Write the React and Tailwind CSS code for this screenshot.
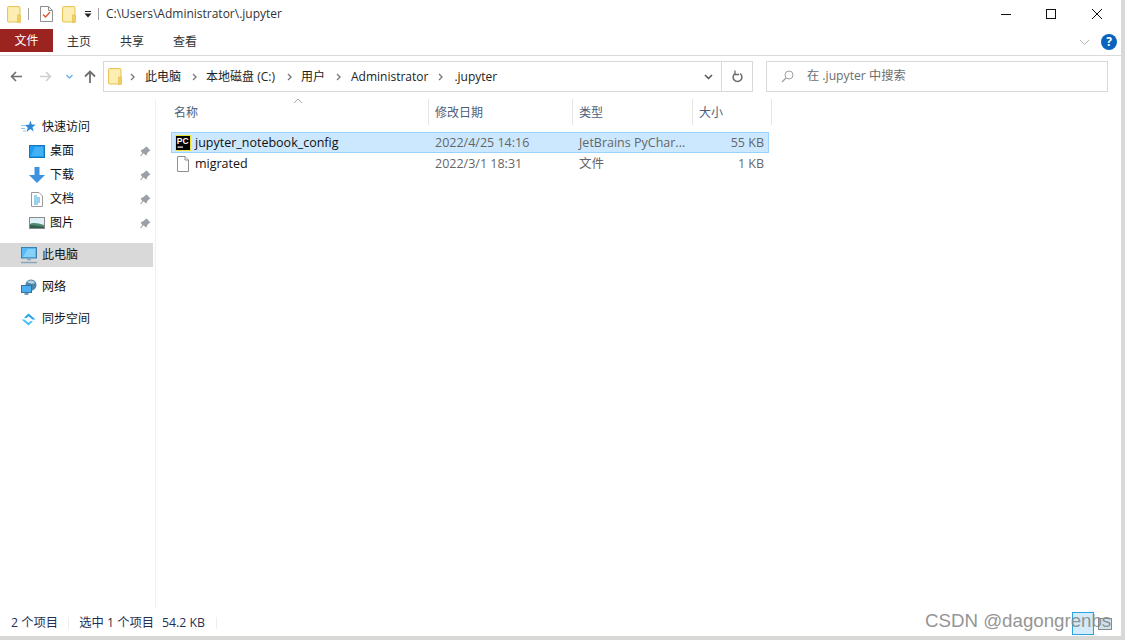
import React from "react";

const UI = { fontFamily: '"Open Sans","Noto Sans CJK SC",sans-serif' };

const FolderIcon = ({ className = "" }) => (
  <svg className={className} width="14" height="17" viewBox="0 0 14 17">
    <rect x="0.5" y="0.5" width="12.5" height="15.5" rx="1" fill="#fce597" stroke="#e6c65c" />
    <rect x="1.5" y="1.5" width="10.5" height="13.5" fill="#fdeeb4" />
    <rect x="10.5" y="9" width="3" height="7.5" fill="#f4cf5d" stroke="#e2bd4f" strokeWidth="0.6" />
  </svg>
);

const CheckDoc = () => (
  <svg width="13" height="16" viewBox="0 0 13 16">
    <path d="M.5.5h8l4 4v11H.5z" fill="#fff" stroke="#8f8f8f" />
    <path d="M8.5.5v4h4" fill="none" stroke="#8f8f8f" />
    <path d="M3 8.500l2.500 2.500L10 6" fill="none" stroke="#e0562a" strokeWidth="1.300" />
  </svg>
);

const Chevron = () => (
  <svg width="5" height="8" viewBox="0 0 5 8" className="shrink-0">
    <path d="M1 1l3 3-3 3" fill="none" stroke="#7b7b7b" strokeWidth="1.400" />
  </svg>
);

const Pin = () => (
  <svg width="11" height="11" viewBox="0 0 11 11" className="shrink-0">
    <path d="M6.600.5l3.900 3.900-1.200.5-2.200 2.400-.3 2-1.400-.3-1.700-1.700L.8 10.200 0 9.900l2.400-3L1 5.300l-.2-1.400 2-.3 2.400-2.200z" fill="#9aa0a6" />
  </svg>
);

const NavRow = ({ icon, label, pinned, active, indent }) => (
  <div className={`flex items-center h-6 mr-[2px] ${active ? "bg-[#d9d9d9]" : ""} ${indent ? "pl-[28px]" : "pl-[20px]"}`}>
    <span className="flex justify-center shrink-0 w-[17px]">{icon}</span>
    <span className="ml-[5px] text-[12px] text-[#111]">{label}</span>
    {pinned && <span className="ml-auto mr-[2px]"><Pin /></span>}
  </div>
);

const QuickStar = () => (
  <svg width="15" height="14" viewBox="0 0 15 14">
    <path d="M9.500.5l1.200 4 4 .2-3.200 2.500 1.200 4.300-3.400-2.400L5.600 12l1.200-4.300L4 5l4-.3z" fill="#2c86d8" />
    <path d="M0 5.500h4M0 8.500h4M2 11h3" stroke="#8cc7f2" strokeWidth="1" />
  </svg>
);

const Desktop = () => (
  <svg width="16" height="13" viewBox="0 0 16 13">
    <rect x=".5" y=".5" width="15" height="12" fill="#1d9bf0" stroke="#1376b8" />
    <path d="M2 11L6 2h8v9z" fill="#5ec0f8" opacity=".6" />
  </svg>
);

const Download = () => (
  <svg width="16" height="16" viewBox="0 0 16 16">
    <path d="M5.500 0h5v8H16l-8 8-8-8h5.500z" fill="#3d93de" />
  </svg>
);

const Docs = () => (
  <svg width="12" height="15" viewBox="0 0 12 15">
    <path d="M.5.5h7.500l3.500 3.500v10.500H.5z" fill="#fff" stroke="#9a9a9a" />
    <path d="M3 6h6M3 8h6M3 10h6M3 12h4M3 4h3" stroke="#3aa0e0" strokeWidth="1" />
  </svg>
);

const Pictures = () => (
  <svg width="16" height="12" viewBox="0 0 16 12">
    <rect x=".5" y=".5" width="15" height="11" fill="#dff0f7" stroke="#8a8a8a" />
    <path d="M1 7c3-2 8-1 14 1v3H1z" fill="#4f8a70" />
    <path d="M1 8c4 0 8 1 14 2v1H1z" fill="#2f5d4e" />
  </svg>
);

const Computer = () => (
  <svg width="16" height="17" viewBox="0 0 16 17">
    <rect x=".5" y=".5" width="15" height="10.500" fill="#55baf7" stroke="#3d7fae" />
    <path d="M2 10L7 2h7v8z" fill="#9adcfb" opacity=".7" />
    <path d="M6 12.500h4M0 15.500h16" stroke="#8ba6bd" strokeWidth="1.500" />
  </svg>
);

const Network = () => (
  <svg width="16" height="16" viewBox="0 0 16 16">
    <circle cx="10" cy="6" r="5.500" fill="#4f86a8" />
    <path d="M6 3c3-2 6-2 8 1-2 1-5 1-8-1z" fill="#b7d3e2" />
    <rect x=".5" y="6.500" width="10" height="7" fill="#4aaef0" stroke="#35729c" />
    <path d="M3.500 15h4" stroke="#35729c" strokeWidth="1.400" />
  </svg>
);

const SyncSpace = () => (
  <svg width="15" height="13" viewBox="0 0 15 13">
    <path d="M7.500 0.500l7 6-3 0-4-3.200-2 1.700-2.500-.2z" fill="#22a5ee" />
    <path d="M7.500 12.500l-7-6 3 0 4 3.200 2-1.700 2.500.2z" fill="#4cc3f7" />
  </svg>
);

const PyCharmIcon = () => (
  <svg width="16" height="16" viewBox="0 0 16 16">
    <rect x="0" y="0" width="16" height="16" fill="#e8e23a" />
    <rect x="1" y="1" width="14" height="14" fill="#000" />
    <text x="1.800" y="9" fontSize="8.500" fontWeight="700" fill="#fff" fontFamily='"Liberation Sans",sans-serif'>PC</text>
    <rect x="2.500" y="11.500" width="5.500" height="1.200" fill="#fff" />
  </svg>
);

const BlankFile = () => (
  <svg width="12" height="16" viewBox="0 0 12 16">
    <path d="M.5.5h7.500l3.500 3.500v11.500H.5z" fill="#fff" stroke="#8f8f8f" />
    <path d="M8 .5v3.500h3.500" fill="#f2f2f2" stroke="#8f8f8f" />
  </svg>
);

const HeaderCell = ({ label, className }) => (
  <div className={`h-[26px] flex items-center border-r border-[#e5e5e5] pl-[6px] pt-[2px] text-[12px] text-[#4c607a] ${className}`}>{label}</div>
);

const Cell = ({ className, children }) => <span className={`pt-[2px] ${className}`}>{children}</span>;

const FileRow = ({ icon, name, date, type, size, selected }) => (
  <div className={`flex items-center h-[21px] border text-[12.500px] ${selected ? "bg-[#cce8ff] border-[#99d1ff]" : "border-transparent"}`}>
    <span className="w-[23px] flex justify-center shrink-0 ml-[-1px]">{icon}</span>
    <Cell className="w-[240px] pl-px text-[#111]">{name}</Cell>
    <Cell className="w-[144px] pl-px text-[#666]">{date}</Cell>
    <Cell className="w-[111px] pl-px text-[#666] truncate">{type}</Cell>
    <Cell className="w-[78px] text-right pr-[3px] text-[#666]">{size}</Cell>
  </div>
);

export default function App() {
  return (
    <div className="relative w-[1125px] h-[640px] overflow-hidden bg-[#d8d8d6]" style={UI}>
      <div className="w-[1121px] h-[636px] bg-white flex flex-col">
        {/* Title bar */}
        <div className="h-[28px] flex items-center pl-[7px] shrink-0">
          <FolderIcon />
          <span className="ml-[7px] w-px h-[12px] bg-[#a0a0a0]" />
          <span className="ml-[11px]"><CheckDoc /></span>
          <span className="ml-[9px]"><FolderIcon /></span>
          <svg className="ml-[8px]" width="8" height="7" viewBox="0 0 8 7">
            <path d="M1 .5h6" stroke="#222" />
            <path d="M.5 2.500h7L4 6.500z" fill="#222" />
          </svg>
          <span className="ml-[6px] w-px h-[12px] bg-[#a0a0a0]" />
          <span className="ml-[7px] text-[12px] text-[#333]">C:\Users\Administrator\.jupyter</span>
          <div className="ml-auto flex items-center">
            <svg width="45" height="12" viewBox="0 0 45 12"><path d="M0 6.500h10" stroke="#111" /></svg>
            <svg width="46" height="12" viewBox="0 0 46 12"><rect x="0.500" y="1.500" width="9" height="9" fill="none" stroke="#111" /></svg>
            <svg width="29" height="12" viewBox="0 0 29 12"><path d="M0 1l10 10M10 1L0 11" stroke="#111" strokeWidth="1" /></svg>
          </div>
        </div>

        {/* Ribbon tabs */}
        <div className="h-[28px] flex items-start border-b border-[#dadada] shrink-0">
          <div className="w-[53px] h-[23px] mt-px pt-px bg-[#9b2320] text-white text-[12px] flex items-center justify-center">文件</div>
          <div className="ml-[14px] mt-[2px] h-[23px] flex items-center gap-[29px] text-[12px] text-[#333]">
            <span>主页</span>
            <span>共享</span>
            <span>查看</span>
          </div>
          <div className="ml-auto mr-[4px] mt-[6px] flex items-center gap-[11px]">
            <svg width="11" height="7" viewBox="0 0 11 7"><path d="M1 1l4.500 4.500L10 1" fill="none" stroke="#b5b5b5" /></svg>
            <span className="w-[16px] h-[16px] rounded-full bg-[#0a63bd] text-white text-[12px] font-bold flex items-center justify-center">?</span>
          </div>
        </div>

        {/* Address row */}
        <div className="h-[31px] mt-[5px] flex items-center shrink-0">
          <div className="w-[103px] flex items-center pl-[10px] shrink-0">
            <svg width="13" height="11" viewBox="0 0 13 11"><path d="M12 5.500H2M6 1L1.500 5.500 6 10" fill="none" stroke="#6e6e6e" strokeWidth="1.600" /></svg>
            <svg className="ml-[16px]" width="13" height="11" viewBox="0 0 13 11"><path d="M1 5.500h10M7 1l4.500 4.500L7 10" fill="none" stroke="#cfcfcf" strokeWidth="1.600" /></svg>
            <svg className="ml-[14px]" width="7" height="5" viewBox="0 0 7 5"><path d="M.5 1l3 3 3-3" fill="none" stroke="#69aee8" strokeWidth="1.300" /></svg>
            <svg className="ml-[11px]" width="12" height="13" viewBox="0 0 12 13"><path d="M6 13V2M1 6.500L6 1.500l5 5" fill="none" stroke="#6e6e6e" strokeWidth="1.800" /></svg>
          </div>
          <div className="w-[650px] h-[31px] border border-[#d9d9d9] flex items-center shrink-0">
            <span className="ml-[4px]"><FolderIcon /></span>
            <div className="flex items-center text-[12px] text-[#222]">
              <span className="ml-[8px]"><Chevron /></span>
              <span className="ml-[10px]">此电脑</span>
              <span className="ml-[11px]"><Chevron /></span>
              <span className="ml-[9px]">本地磁盘 (C:)</span>
              <span className="ml-[12px]"><Chevron /></span>
              <span className="ml-[9px]">用户</span>
              <span className="ml-[11px]"><Chevron /></span>
              <span className="ml-[10px]">Administrator</span>
              <span className="ml-[10px]"><Chevron /></span>
              <span className="ml-[11px]">.jupyter</span>
            </div>
            <div className="ml-auto h-full flex items-center">
              <svg className="mr-[8px]" width="9" height="6" viewBox="0 0 9 6"><path d="M1 1l3.500 3.500L8 1" fill="none" stroke="#555" strokeWidth="1.500" /></svg>
              <div className="w-[31px] h-full border-l border-[#d9d9d9] flex items-center justify-center">
                <svg width="11" height="13" viewBox="0 0 11 13"><path d="M3 3.500a4.400 4.400 0 1 0 5 0" fill="none" stroke="#6a6a6a" strokeWidth="1.500" /><path d="M3 .5v4h4" fill="none" stroke="#6a6a6a" strokeWidth="1.300" /></svg>
              </div>
            </div>
          </div>
          <div className="ml-[13px] w-[342px] h-[31px] border border-[#d9d9d9] flex items-center shrink-0 pl-[14px]">
            <svg width="13" height="13" viewBox="0 0 13 13"><circle cx="8" cy="5" r="4" fill="none" stroke="#a0a0a0" /><path d="M5 8l-4 4" stroke="#a0a0a0" strokeWidth="1.200" /></svg>
            <span className="ml-[13px] text-[12.200px] text-[#6d6d6d]">在 .jupyter 中搜索</span>
          </div>
        </div>

        {/* Main area: navigation pane and file list */}
        <div className="flex-1 flex min-h-0 mt-[7px]">
          <aside className="w-[156px] shrink-0 border-r border-[#f0f0f0] pt-[16px]">
            <NavRow icon={<QuickStar />} label="快速访问" />
            <NavRow indent pinned icon={<Desktop />} label="桌面" />
            <NavRow indent pinned icon={<Download />} label="下载" />
            <NavRow indent pinned icon={<Docs />} label="文档" />
            <NavRow indent pinned icon={<Pictures />} label="图片" />
            <div className="h-2" />
            <NavRow active icon={<Computer />} label="此电脑" />
            <div className="h-2" />
            <NavRow icon={<Network />} label="网络" />
            <div className="h-2" />
            <NavRow icon={<SyncSpace />} label="同步空间" />
          </aside>
          <main className="flex-1 pl-[12px] relative">
            <svg className="absolute left-[137px] top-[-1px]" width="10" height="6" viewBox="0 0 10 6"><path d="M1 5l4-4 4 4" fill="none" stroke="#a8a8a8" /></svg>
            <div className="flex">
              <HeaderCell label="名称" className="w-[261px]" />
              <HeaderCell label="修改日期" className="w-[144px]" />
              <HeaderCell label="类型" className="w-[120px]" />
              <HeaderCell label="大小" className="w-[79px]" />
            </div>
            <div className="mt-[7px] w-[598px] ml-[3px]">
              <FileRow selected icon={<PyCharmIcon />} name="jupyter_notebook_config" date="2022/4/25 14:16" type="JetBrains PyChar..." size="55 KB" />
              <FileRow icon={<BlankFile />} name="migrated" date="2022/3/1 18:31" type="文件" size="1 KB" />
            </div>
          </main>
        </div>

        {/* Status bar */}
        <div className="h-[28px] shrink-0 flex items-center pl-[11px] pt-[2px] text-[12.300px] text-[#1f2f55]">
          <span>2 个项目</span>
          <span className="ml-[10px] w-px h-[12px] bg-[#eeeeee]" />
          <span className="ml-[10px]">选中 1 个项目</span>
          <span className="ml-[8px]">54.2 KB</span>
          <span className="ml-[11px] w-px h-[12px] bg-[#eeeeee]" />
        </div>
      </div>

      {/* View toggle and blog watermark over the status bar */}
      <div className="absolute left-[1072px] top-[612px] w-[22px] h-[23px] border border-[#2aa3e0] bg-[#d3ebfa]" />
      <div className="absolute left-[1098px] top-[618px] w-[14px] h-[12px] border border-[#8a8a8a] bg-[#cfe3ee]" />
      <div className="absolute left-[925px] top-[607px] text-[18.700px] text-[#8a8a8a] opacity-90" style={{ fontFamily: '"Liberation Sans",sans-serif' }}>CSDN @dagongrenbs</div>
    </div>
  );
}
